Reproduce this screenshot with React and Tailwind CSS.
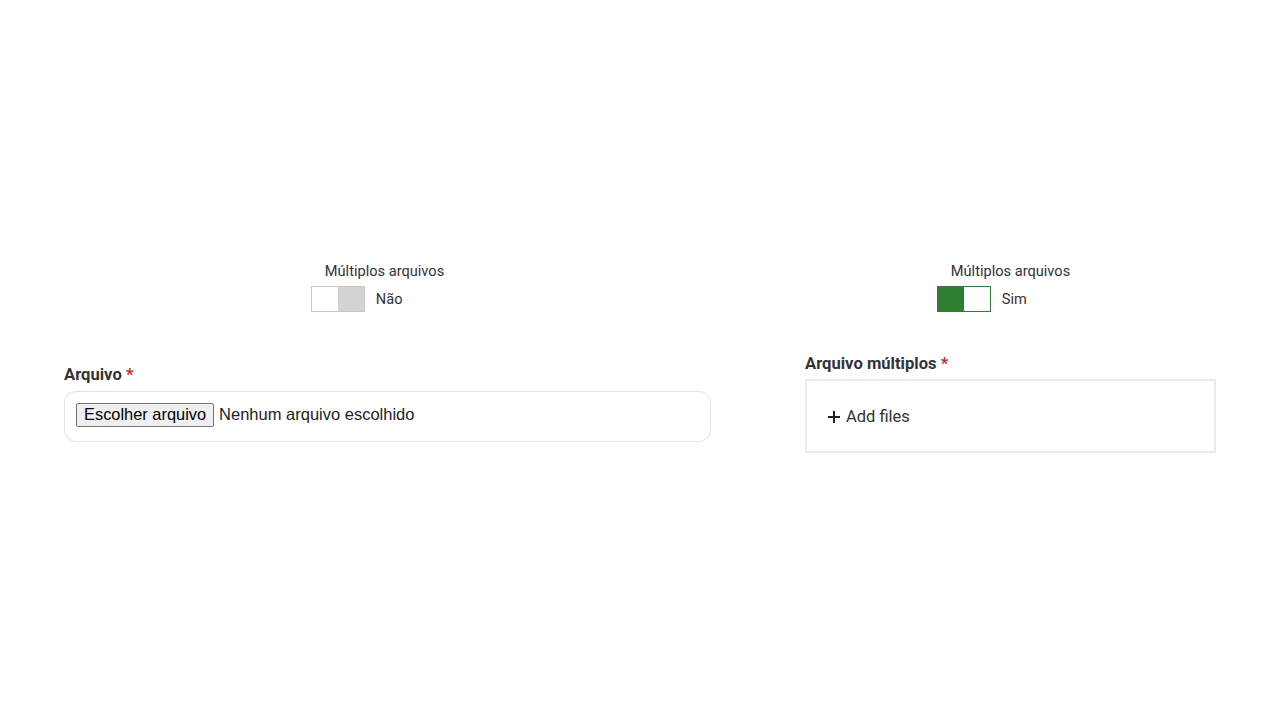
export default function App() {
  return (
    <div className="w-[1280px] h-[720px] bg-white" style={{ fontFamily: "Roboto, 'Liberation Sans', sans-serif" }}>
      <div className="flex justify-between px-16 pt-[262px]">
        {/* Left column */}
        <div className="w-[647px] flex flex-col">
          <div className="flex justify-center pr-[6px]">
            <div className="flex flex-col items-start">
              <div className="text-[14.6px] leading-[18px] text-[#333]">Múltiplos arquivos</div>
              <div className="flex items-center mt-[6px] ml-[-14px]">
                <div className="flex w-[54px] h-[26px] border border-[#c8c8c8]">
                  <div className="w-1/2 h-full bg-white"></div>
                  <div className="w-1/2 h-full bg-[#d3d3d3]"></div>
                </div>
                <span className="ml-[11px] mt-[2px] text-[14.6px] text-[#333]">Não</span>
              </div>
            </div>
          </div>
          <div className="mt-[53px] text-[16.6px] leading-[20px] font-bold text-[#333]">
            Arquivo <span className="text-[#c62828]">*</span>
          </div>
          <div className="mt-[6px] h-[51px] border border-[#e3e3e3] rounded-[12px] flex items-center px-[11px] pb-[4px]">
            <button className="h-[24px] px-[7px] bg-[#efefef] border border-[#767676] rounded-[2px] text-[16.4px] text-black leading-none" style={{ fontFamily: "'Liberation Sans', Arial, sans-serif" }}>
              Escolher arquivo
            </button>
            <span className="ml-[5px] text-[16.5px] text-[#222]" style={{ fontFamily: "'Liberation Sans', Arial, sans-serif" }}>Nenhum arquivo escolhido</span>
          </div>
        </div>
        {/* Right column */}
        <div className="w-[411px] flex flex-col">
          <div className="flex justify-center">
            <div className="flex flex-col items-start">
              <div className="text-[14.6px] leading-[18px] text-[#333]">Múltiplos arquivos</div>
              <div className="flex items-center mt-[6px] ml-[-14px]">
                <div className="flex w-[54px] h-[26px] border border-[#2e7d32]">
                  <div className="w-1/2 h-full bg-[#2e7d32]"></div>
                  <div className="w-1/2 h-full bg-white"></div>
                </div>
                <span className="ml-[11px] mt-[2px] text-[14.6px] text-[#333]">Sim</span>
              </div>
            </div>
          </div>
          <div className="mt-[42px] text-[16.6px] leading-[20px] font-bold text-[#333]">
            Arquivo múltiplos <span className="text-[#c62828]">*</span>
          </div>
          <div className="mt-[5px] h-[74px] border-2 border-[#ececec] flex items-center px-[20px] pt-[2px]">
            <span className="flex items-center text-[16.5px] text-[#333]">
              <svg width="14" height="14" viewBox="0 0 14 14" className="mr-[5px]">
                <path d="M7 1v12M1 7h12" stroke="#222" strokeWidth="2" />
              </svg>
              Add files
            </span>
          </div>
        </div>
      </div>
    </div>
  );
}
